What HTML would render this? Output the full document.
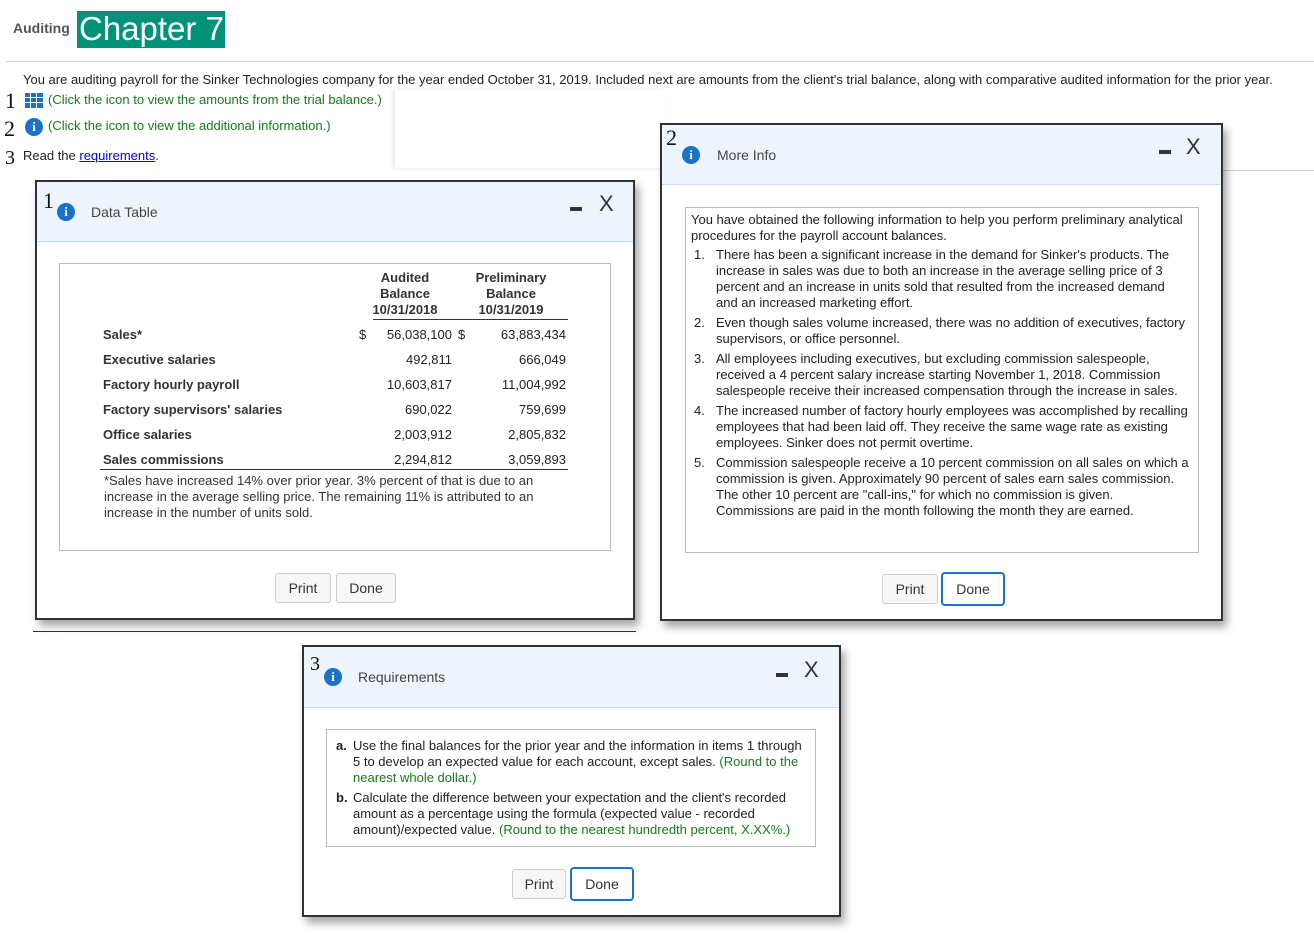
<!DOCTYPE html>
<html><head><meta charset="utf-8"><style>
body{margin:0;width:1314px;height:936px;position:relative;background:#fff;font-family:"Liberation Sans",Arial,sans-serif;font-size:13px;color:#222;overflow:hidden}
.a{position:absolute;white-space:nowrap}
.dlg{position:absolute;border:2px solid #333;background:#fff;box-shadow:4px 6px 8px rgba(0,0,0,.35)}
.hdr{position:absolute;left:0;right:0;top:0;background:#eef4fc;border-bottom:1px solid #c9ddf0}
.ic{position:absolute;width:18px;height:18px;border-radius:50%;background:#1a73c9;color:#fff;font:bold 13px "Liberation Serif",serif;text-align:center;line-height:18px}
.ttl{position:absolute;font-size:14px;color:#444}
.mn{position:absolute;width:12px;height:4px;background:#333}
.x{position:absolute;font-size:22px;color:#333;line-height:22px}
.box{position:absolute;border:1px solid #bbb}
.btn{position:absolute;height:28px;border:1px solid #ccc;border-radius:3px;background:#f7f7f7;color:#333;font-size:14px;line-height:28px;text-align:center}
.btn.b{border:2px solid #1a73c9;background:#fff;border-radius:4px;line-height:30px;height:30px}
.num{position:absolute;font:22px "Liberation Serif",serif;color:#111}
.r{text-align:right}
.g{color:#197a1c}
.it{position:absolute;line-height:16px;white-space:nowrap}
</style></head><body>
<div class="a" style="left:13px;top:20px;font-weight:bold;font-size:14px;color:#555">Auditing</div>
<div class="a" style="left:77px;top:11px;width:146px;height:37px;background:#00937a;color:#fff;font-size:33px;line-height:36px;padding-left:2px">Chapter 7</div>
<div class="a" style="left:6px;top:61px;width:1308px;border-top:1px solid #d6d6de"></div>
<div class="a" style="left:23px;top:72px">You are auditing payroll for the Sinker Technologies company for the year ended October 31, 2019. Included next are amounts from the client's trial balance, along with comparative audited information for the prior year.</div>
<div class="num" style="left:5px;top:88px">1</div>
<div class="a" style="left:25px;top:93px;width:18px;height:15px;background:#1a73c9;background-image:linear-gradient(90deg,transparent 5px,#fff 5px,#fff 6px,transparent 6px,transparent 11px,#fff 11px,#fff 12px,transparent 12px),linear-gradient(transparent 4px,#fff 4px,#fff 5px,transparent 5px,transparent 9px,#fff 9px,#fff 10px,transparent 10px)"></div>
<div class="a g" style="left:48px;top:92px">(Click the icon to view the amounts from the trial balance.)</div>
<div class="num" style="left:4px;top:116px">2</div>
<div class="ic" style="left:25px;top:118px">i</div>
<div class="a g" style="left:48px;top:118px">(Click the icon to view the additional information.)</div>
<div class="num" style="left:5px;top:147px;font-size:20px">3</div>
<div class="a" style="left:23px;top:148px">Read the <span style="color:#00e;text-decoration:underline">requirements</span>.</div>
<div class="a" style="left:395px;top:90px;width:270px;height:78px;background:#fff;box-shadow:-2px 0 4px rgba(0,0,0,.1)"></div>
<div class="a" style="left:1222px;top:170px;width:92px;border-top:1px solid #ccc"></div>

<!-- Dialog 1 -->
<div class="dlg" style="left:35px;top:180px;width:596px;height:436px">
<div class="hdr" style="height:59px"></div>
<div class="num" style="left:6px;top:6px">1</div>
<div class="ic" style="left:20px;top:21px">i</div>
<div class="ttl" style="left:54px;top:22px">Data Table</div>
<div class="mn" style="left:533px;top:25px"></div>
<div class="x" style="left:562px;top:11px">X</div>
<div class="box" style="left:22px;top:81px;width:550px;height:286px"></div>
</div>
<div class="a" style="left:372px;top:270px;width:66px;text-align:center;line-height:16px;font-weight:bold;color:#333">Audited<br>Balance<br>10/31/2018</div>
<div class="a" style="left:474px;top:270px;width:74px;text-align:center;line-height:16px;font-weight:bold;color:#333">Preliminary<br>Balance<br>10/31/2019</div>
<div class="a" style="left:373px;top:319px;width:195px;border-top:1px solid #333"></div>
<div class="a" style="left:100px;top:469px;width:468px;border-top:1px solid #333"></div>
<div style="position:absolute;left:103px;top:322px;line-height:25px;font-weight:bold;color:#333">Sales*<br>Executive salaries<br>Factory hourly payroll<br>Factory supervisors' salaries<br>Office salaries<br>Sales commissions</div>
<div class="a" style="left:359px;top:322px;line-height:25px">$</div>
<div class="a r" style="left:372px;top:322px;width:80px;line-height:25px">56,038,100<br>492,811<br>10,603,817<br>690,022<br>2,003,912<br>2,294,812</div>
<div class="a" style="left:458px;top:322px;line-height:25px">$</div>
<div class="a r" style="left:476px;top:322px;width:90px;line-height:25px">63,883,434<br>666,049<br>11,004,992<br>759,699<br>2,805,832<br>3,059,893</div>
<div class="a" style="left:104px;top:473px;line-height:16px;color:#333">*Sales have increased 14% over prior year. 3% percent of that is due to an<br>increase in the average selling price. The remaining 11% is attributed to an<br>increase in the number of units sold.</div>
<div class="btn" style="left:275px;top:573px;width:54px">Print</div>
<div class="btn" style="left:336px;top:573px;width:58px">Done</div>
<div class="a" style="left:33px;top:631px;width:603px;border-top:1px solid #234"></div>

<!-- Dialog 2 -->
<div class="dlg" style="left:660px;top:123px;width:559px;height:494px">
<div class="hdr" style="height:59px"></div>
<div class="num" style="left:4px;top:0px">2</div>
<div class="ic" style="left:20px;top:21px">i</div>
<div class="ttl" style="left:55px;top:22px">More Info</div>
<div class="mn" style="left:497px;top:25px"></div>
<div class="x" style="left:524px;top:11px">X</div>
<div class="box" style="left:23px;top:82px;width:512px;height:344px"></div>
</div>
<div class="a" style="left:691px;top:212px;line-height:16px;color:#222;white-space:normal;width:505px">You have obtained the following information to help you perform preliminary analytical procedures for the payroll account balances.</div>
<div class="it" style="left:694px;top:247px">1.</div>
<div class="it" style="left:716px;top:247px">There has been a significant increase in the demand for Sinker's products. The<br>increase in sales was due to both an increase in the average selling price of 3<br>percent and an increase in units sold that resulted from the increased demand<br>and an increased marketing effort.</div>
<div class="it" style="left:694px;top:315px">2.</div>
<div class="it" style="left:716px;top:315px">Even though sales volume increased, there was no addition of executives, factory<br>supervisors, or office personnel.</div>
<div class="it" style="left:694px;top:351px">3.</div>
<div class="it" style="left:716px;top:351px">All employees including executives, but excluding commission salespeople,<br>received a 4 percent salary increase starting November 1, 2018. Commission<br>salespeople receive their increased compensation through the increase in sales.</div>
<div class="it" style="left:694px;top:403px">4.</div>
<div class="it" style="left:716px;top:403px">The increased number of factory hourly employees was accomplished by recalling<br>employees that had been laid off. They receive the same wage rate as existing<br>employees. Sinker does not permit overtime.</div>
<div class="it" style="left:694px;top:455px">5.</div>
<div class="it" style="left:716px;top:455px">Commission salespeople receive a 10 percent commission on all sales on which a<br>commission is given. Approximately 90 percent of sales earn sales commission.<br>The other 10 percent are "call-ins," for which no commission is given.<br>Commissions are paid in the month following the month they are earned.</div>
<div class="btn" style="left:882px;top:574px;width:54px">Print</div>
<div class="btn b" style="left:941px;top:572px;width:60px">Done</div>

<!-- Dialog 3 -->
<div class="dlg" style="left:302px;top:645px;width:535px;height:268px">
<div class="hdr" style="height:60px"></div>
<div class="num" style="left:6px;top:6px;font-size:20px">3</div>
<div class="ic" style="left:20px;top:21px">i</div>
<div class="ttl" style="left:54px;top:22px">Requirements</div>
<div class="mn" style="left:472px;top:26px"></div>
<div class="x" style="left:500px;top:12px">X</div>
<div class="box" style="left:22px;top:82px;width:488px;height:116px"></div>
</div>
<div class="it" style="left:336px;top:738px;font-weight:bold">a.</div>
<div class="it" style="left:353px;top:738px">Use the final balances for the prior year and the information in items 1 through<br>5 to develop an expected value for each account, except sales. <span class="g">(Round to the</span><br><span class="g">nearest whole dollar.)</span></div>
<div class="it" style="left:336px;top:790px;font-weight:bold">b.</div>
<div class="it" style="left:353px;top:790px">Calculate the difference between your expectation and the client's recorded<br>amount as a percentage using the formula (expected value - recorded<br>amount)/expected value. <span class="g">(Round to the nearest hundredth percent, X.XX%.)</span></div>
<div class="btn" style="left:512px;top:869px;width:52px">Print</div>
<div class="btn b" style="left:570px;top:867px;width:60px">Done</div>
</body></html>
